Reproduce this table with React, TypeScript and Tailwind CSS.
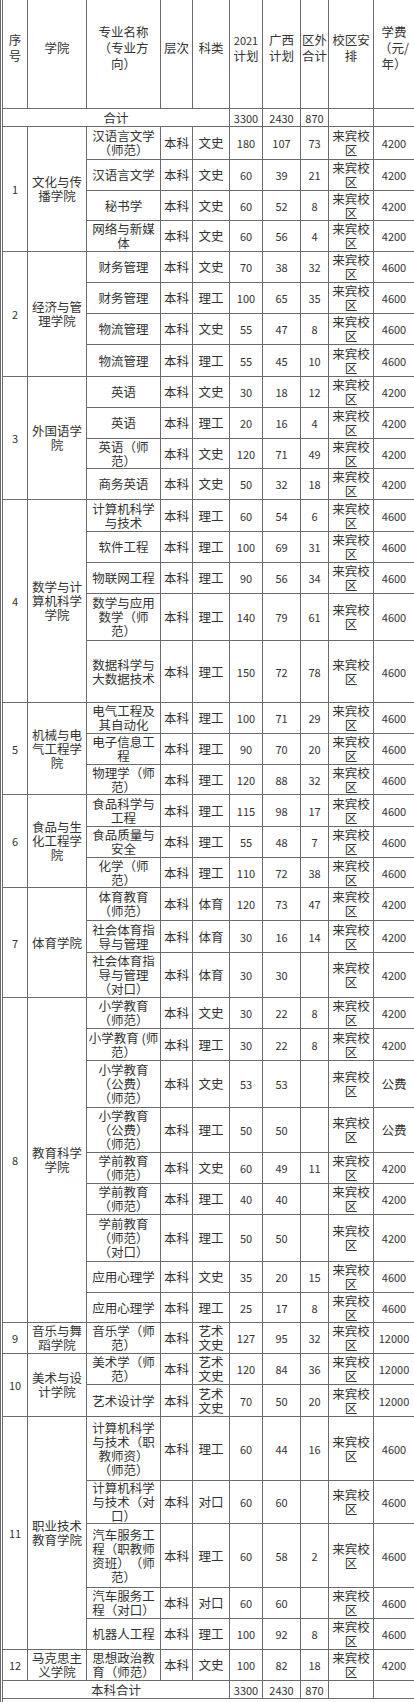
import React from "react";

type Row = {
  major: string;
  cat: string;
  plan: string;
  gx: string;
  out: string;
  fee: string;
  h: string;
};

type Group = { no: string; school: string; rows: Row[] };

// line breaks are written out so the wrap matches the printed table
const groups: Group[] = [
  {
    no: "1",
    school: "文化与传\n播学院",
    rows: [
      { major: "汉语言文学\n（师范）", cat: "文史", plan: "180", gx: "107", out: "73", fee: "4200", h: "h-[33px]" },
      { major: "汉语言文学", cat: "文史", plan: "60", gx: "39", out: "21", fee: "4200", h: "h-[31px]" },
      { major: "秘书学", cat: "文史", plan: "60", gx: "52", out: "8", fee: "4200", h: "h-[30px]" },
      { major: "网络与新媒\n体", cat: "文史", plan: "60", gx: "56", out: "4", fee: "4200", h: "h-[31px]" },
    ],
  },
  {
    no: "2",
    school: "经济与管\n理学院",
    rows: [
      { major: "财务管理", cat: "文史", plan: "70", gx: "38", out: "32", fee: "4600", h: "h-[31px]" },
      { major: "财务管理", cat: "理工", plan: "100", gx: "65", out: "35", fee: "4600", h: "h-[31px]" },
      { major: "物流管理", cat: "文史", plan: "55", gx: "47", out: "8", fee: "4600", h: "h-[31px]" },
      { major: "物流管理", cat: "理工", plan: "55", gx: "45", out: "10", fee: "4600", h: "h-[32px]" },
    ],
  },
  {
    no: "3",
    school: "外国语学\n院",
    rows: [
      { major: "英语", cat: "文史", plan: "30", gx: "18", out: "12", fee: "4200", h: "h-[31px]" },
      { major: "英语", cat: "理工", plan: "20", gx: "16", out: "4", fee: "4200", h: "h-[31px]" },
      { major: "英语（师\n范）", cat: "文史", plan: "120", gx: "71", out: "49", fee: "4200", h: "h-[30px]" },
      { major: "商务英语", cat: "文史", plan: "50", gx: "32", out: "18", fee: "4200", h: "h-[31px]" },
    ],
  },
  {
    no: "4",
    school: "数学与计\n算机科学\n学院",
    rows: [
      { major: "计算机科学\n与技术", cat: "理工", plan: "60", gx: "54", out: "6", fee: "4600", h: "h-[32px]" },
      { major: "软件工程", cat: "理工", plan: "100", gx: "69", out: "31", fee: "4600", h: "h-[31px]" },
      { major: "物联网工程", cat: "理工", plan: "90", gx: "56", out: "34", fee: "4600", h: "h-[31px]" },
      { major: "数学与应用\n数学（师\n范）", cat: "理工", plan: "140", gx: "79", out: "61", fee: "4600", h: "h-[47px]" },
      { major: "数据科学与\n大数据技术", cat: "理工", plan: "150", gx: "72", out: "78", fee: "4600", h: "h-[62px]" },
    ],
  },
  {
    no: "5",
    school: "机械与电\n气工程学\n院",
    rows: [
      { major: "电气工程及\n其自动化", cat: "理工", plan: "100", gx: "71", out: "29", fee: "4600", h: "h-[31px]" },
      { major: "电子信息工\n程", cat: "理工", plan: "90", gx: "70", out: "20", fee: "4600", h: "h-[31px]" },
      { major: "物理学（师\n范）", cat: "理工", plan: "120", gx: "88", out: "32", fee: "4600", h: "h-[30px]" },
    ],
  },
  {
    no: "6",
    school: "食品与生\n化工程学\n院",
    rows: [
      { major: "食品科学与\n工程", cat: "理工", plan: "115", gx: "98", out: "17", fee: "4600", h: "h-[32px]" },
      { major: "食品质量与\n安全", cat: "理工", plan: "55", gx: "48", out: "7", fee: "4600", h: "h-[31px]" },
      { major: "化学（师\n范）", cat: "理工", plan: "110", gx: "72", out: "38", fee: "4600", h: "h-[30px]" },
    ],
  },
  {
    no: "7",
    school: "体育学院",
    rows: [
      { major: "体育教育\n（师范）", cat: "体育", plan: "120", gx: "73", out: "47", fee: "4200", h: "h-[33px]" },
      { major: "社会体育指\n导与管理", cat: "体育", plan: "30", gx: "16", out: "14", fee: "4200", h: "h-[32px]" },
      { major: "社会体育指\n导与管理\n（对口）", cat: "体育", plan: "30", gx: "30", out: "", fee: "4200", h: "h-[45px]" },
    ],
  },
  {
    no: "8",
    school: "教育科学\n学院",
    rows: [
      { major: "小学教育\n（师范）", cat: "文史", plan: "30", gx: "22", out: "8", fee: "4200", h: "h-[31px]" },
      { major: "小学教育 (师\n范）", cat: "理工", plan: "30", gx: "22", out: "8", fee: "4200", h: "h-[32px]" },
      { major: "小学教育\n（公费）\n（师范）", cat: "文史", plan: "53", gx: "53", out: "", fee: "公费", h: "h-[47px]" },
      { major: "小学教育\n（公费）\n（师范）", cat: "理工", plan: "50", gx: "50", out: "", fee: "公费", h: "h-[45px]" },
      { major: "学前教育\n（师范）", cat: "文史", plan: "60", gx: "49", out: "11", fee: "4200", h: "h-[31px]" },
      { major: "学前教育\n（师范）", cat: "理工", plan: "40", gx: "40", out: "", fee: "4200", h: "h-[31px]" },
      { major: "学前教育\n（师范）\n（对口）", cat: "理工", plan: "50", gx: "50", out: "", fee: "4200", h: "h-[47px]" },
      { major: "应用心理学", cat: "文史", plan: "35", gx: "20", out: "15", fee: "4600", h: "h-[31px]" },
      { major: "应用心理学", cat: "理工", plan: "25", gx: "17", out: "8", fee: "4600", h: "h-[30px]" },
    ],
  },
  {
    no: "9",
    school: "音乐与舞\n蹈学院",
    rows: [
      { major: "音乐学（师\n范）", cat: "艺术\n文史", plan: "127", gx: "95", out: "32", fee: "12000", h: "h-[31px]" },
    ],
  },
  {
    no: "10",
    school: "美术与设\n计学院",
    rows: [
      { major: "美术学（师\n范）", cat: "艺术\n文史", plan: "120", gx: "84", out: "36", fee: "12000", h: "h-[31px]" },
      { major: "艺术设计学", cat: "艺术\n文史", plan: "70", gx: "50", out: "20", fee: "12000", h: "h-[32px]" },
    ],
  },
  {
    no: "11",
    school: "职业技术\n教育学院",
    rows: [
      { major: "计算机科学\n与技术（职\n教师资）\n（师范）", cat: "理工", plan: "60", gx: "44", out: "16", fee: "4600", h: "h-[64px]" },
      { major: "计算机科学\n与技术（对\n口）", cat: "对口", plan: "60", gx: "60", out: "", fee: "4600", h: "h-[43px]" },
      { major: "汽车服务工\n程（职教师\n资班）（师\n范）", cat: "理工", plan: "60", gx: "58", out: "2", fee: "4600", h: "h-[64px]" },
      { major: "汽车服务工\n程（对口）", cat: "对口", plan: "60", gx: "60", out: "", fee: "4600", h: "h-[31px]" },
      { major: "机器人工程", cat: "理工", plan: "100", gx: "92", out: "8", fee: "4600", h: "h-[31px]" },
    ],
  },
  {
    no: "12",
    school: "马克思主\n义学院",
    rows: [
      { major: "思想政治教\n育（师范）", cat: "文史", plan: "100", gx: "82", out: "18", fee: "4200", h: "h-[31px]" },
    ],
  },
];

const cell =
  "border border-[#6b6b6b] px-0 py-0 text-center align-middle whitespace-pre leading-[14px] text-[12.5px] [text-spacing-trim:space-all]";
const num = "border border-[#6b6b6b] px-0 py-0 text-center align-middle whitespace-pre leading-[14px] text-[11px]";
const head =
  "border border-[#6b6b6b] px-0 pt-0 pb-[12px] text-center align-middle whitespace-pre leading-[16px] text-[12.5px] [text-spacing-trim:space-all]";

const TotalRow = ({ label }: { label: string }) => (
  <tr className="h-[18px]">
    <td colSpan={5} className={cell}>
      {label}
    </td>
    <td className={num}>3300</td>
    <td className={num}>2430</td>
    <td className={num}>870</td>
    <td className={cell}></td>
    <td className={cell}></td>
  </tr>
);

export default function App() {
  return (
    <div
      className="w-[414px] overflow-hidden bg-white text-[#333]"
      style={{ fontFamily: '"Noto Sans CJK SC", "Noto Sans", sans-serif' }}
    >
      <div className="border-l border-[#6b6b6b] pl-px">
        <table className="-mt-px w-[412px] table-fixed border-collapse">
          <colgroup>
            <col className="w-[25px]" />
            <col className="w-[59px]" />
            <col className="w-[74px]" />
            <col className="w-[32px]" />
            <col className="w-[37px]" />
            <col className="w-[33px]" />
            <col className="w-[38px]" />
            <col className="w-[28px]" />
            <col className="w-[45px]" />
            <col className="w-[41px]" />
          </colgroup>
          <tbody>
            <tr className="h-[109px]">
              <td className={head}>{"序\n号"}</td>
              <td className={head}>学院</td>
              <td className={head}>{"专业名称\n（专业方\n向）"}</td>
              <td className={head}>层次</td>
              <td className={head}>科类</td>
              <td className={head}>
                <span className="text-[11px]">2021</span>
                {"\n计划"}
              </td>
              <td className={head}>{"广西\n计划"}</td>
              <td className={head}>{"区外\n合计"}</td>
              <td className={head}>{"校区安\n排"}</td>
              <td className={head}>{"学费\n（元/\n年）"}</td>
            </tr>
            <TotalRow label="合计" />
            {groups.map((g) =>
              g.rows.map((r, i) => (
                <tr key={g.no + "-" + i} className={r.h}>
                  {i === 0 && (
                    <td rowSpan={g.rows.length} className={num}>
                      {g.no}
                    </td>
                  )}
                  {i === 0 && (
                    <td rowSpan={g.rows.length} className={cell}>
                      {g.school}
                    </td>
                  )}
                  <td className={cell}>{r.major}</td>
                  <td className={cell}>本科</td>
                  <td className={cell}>{r.cat}</td>
                  <td className={num}>{r.plan}</td>
                  <td className={num}>{r.gx}</td>
                  <td className={num}>{r.out}</td>
                  <td className={cell}>{"来宾校\n区"}</td>
                  <td className={r.fee === "公费" ? cell : num}>{r.fee}</td>
                </tr>
              ))
            )}
            <TotalRow label="本科合计" />
            <tr className="h-[8px]">
              <td colSpan={10} className="border border-b-0 border-[#6b6b6b]"></td>
            </tr>
          </tbody>
        </table>
      </div>
    </div>
  );
}
